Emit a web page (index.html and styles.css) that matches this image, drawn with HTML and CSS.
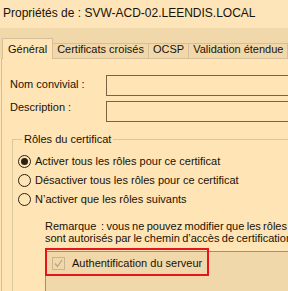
FILE: index.html
```html
<!DOCTYPE html>
<html lang="fr">

<head>
    <meta charset="UTF-8">
    <title>Propriétés</title>
    <link rel="stylesheet" href="styles.css">
</head>

<body>
    <div class="title">Propriétés de : SVW-ACD-02.LEENDIS.LOCAL</div>

    <div class="tabs">
        <div class="tab active">Général</div>
        <div class="tab">Certificats croisés</div>
        <div class="tab">OCSP</div>
        <div class="tab">Validation étendue</div>
    </div>

    <div class="panel">
        <div class="field first">
            <label>Nom convivial :</label>
            <div class="input"></div>
        </div>
        <div class="field second">
            <label>Description :</label>
            <div class="input"></div>
        </div>

        <fieldset class="group">
            <legend>Rôles du certificat</legend>
            <div class="radio-row"><span class="radio checked"></span>Activer tous les rôles pour ce certificat</div>
            <div class="radio-row"><span class="radio"></span>Désactiver tous les rôles pour ce certificat</div>
            <div class="radio-row"><span class="radio"></span>N’activer que les rôles suivants</div>

            <p class="note">Remarque &nbsp;: vous ne pouvez modifier que les rôles<br>sont autorisés par le chemin d’accès de certification</p>

            <div class="list">
                <div class="list-item">
                    <span class="check">
                        <svg width="11" height="11" viewBox="0 0 11 11">
                            <path d="M2 5.5 L4.5 8.5 L9 2" fill="none" stroke="#b9a483" stroke-width="1.3" />
                        </svg>
                    </span>
                    Authentification du serveur
                </div>
                <span class="highlight"></span>
            </div>
        </fieldset>
    </div>
</body>

</html>
```

FILE: styles.css
```css
html,
body {
    margin: 0;
    height: 100%;
    overflow: hidden;
}

body {
    background: #ffe4b5;
    color: #1a1206;
    font-family: 'Liberation Sans', Arial, sans-serif;
    font-size: 11px;
    line-height: 13px;
}

.title {
    height: 28px;
    padding: 6px 0 0 3px;
    box-sizing: border-box;
    background: #fee5b9;
    font-size: 12px;
    line-height: 14px;
    white-space: nowrap;
}

/* Tabs */
.tabs {
    display: flex;
    align-items: flex-end;
    height: 30px;
    padding-left: 2px;
    box-sizing: border-box;
    background: #f1d8ab;
    white-space: nowrap;
}

.tab {
    height: 15px;
    box-sizing: border-box;
    padding: 0 4px;
    line-height: 10px;
    border: 1px solid #d6bf98;
    border-bottom: none;
    border-left: none;
    background: #f1d8ab;
}

.tab.active {
    height: 21px;
    padding: 5px 5px 0 5px;
    border-left: 1px solid #d6bf98;
    background: #ffe4b5;
    margin-bottom: -1px;
    position: relative;
}

.panel {
    border-left: 1px solid #d6bf98;
    border-top: 1px solid #d6bf98;
    margin-left: 1px;
    height: 240px;
    box-sizing: border-box;
}

.field {
    display: flex;
    align-items: flex-start;
}

.field.first {
    margin-top: 16px;
}

.field.second {
    margin-top: 5px;
}

.field label {
    width: 104px;
    padding: 3px 0 0 8px;
    box-sizing: border-box;
    flex-shrink: 0;
}

.field.second label {
    padding-top: 0;
}

.input {
    flex: 1;
    height: 21px;
    box-sizing: border-box;
    border: 1px solid #786343;
    border-right: none;
}

/* Group box */
.group {
    margin: 11px 0 0 10px;
    padding: 6px 0 0 5px;
    border: 1px solid #dcc6a0;
    border-right: none;
    border-bottom: none;
}

.group legend {
    margin-left: 4px;
    padding: 0 2px;
}

.radio-row {
    display: flex;
    align-items: center;
    height: 19px;
    white-space: nowrap;
}

.radio {
    width: 13px;
    height: 13px;
    box-sizing: border-box;
    border: 1px solid #2a2116;
    border-radius: 50%;
    margin-right: 4px;
    display: flex;
    align-items: center;
    justify-content: center;
}

.radio.checked::after {
    content: "";
    width: 7px;
    height: 7px;
    border-radius: 50%;
    background: #2a2116;
}

.note {
    margin: 11px 0 0 27px;
    line-height: 12px;
    word-spacing: -0.7px;
    white-space: nowrap;
}

/* List of roles */
.list {
    position: relative;
    margin: 7px 0 0 27px;
    height: 60px;
    background: #f1d8aa;
    border: 1px solid #a48f70;
    border-right: none;
    border-bottom: none;
}

.list-item {
    display: flex;
    align-items: center;
    height: 23px;
    padding-left: 6px;
    white-space: nowrap;
}

.check {
    width: 13px;
    height: 13px;
    box-sizing: border-box;
    border: 1px solid #c9b390;
    margin-right: 7px;
    display: flex;
    align-items: center;
    justify-content: center;
}

.highlight {
    position: absolute;
    left: -1px;
    top: -4px;
    width: 160px;
    height: 24px;
    border: 2px solid #e8141c;
}
```
